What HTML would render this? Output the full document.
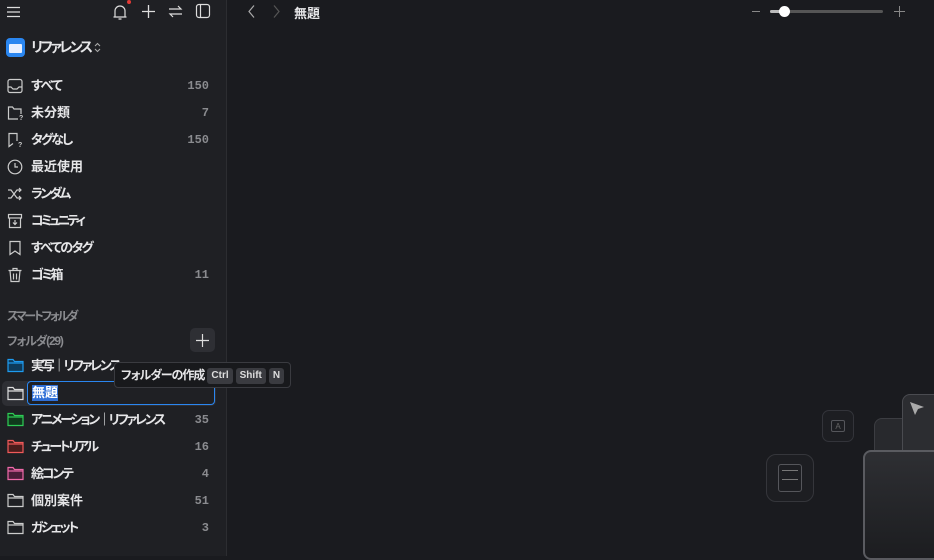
<!DOCTYPE html>
<html><head><meta charset="utf-8"><style>
*{margin:0;padding:0;box-sizing:border-box}
body{width:934px;height:556px;background:#1a1b1f;font-family:"Liberation Sans","Noto Sans CJK JP",sans-serif;color:#e6e6e8;overflow:hidden;position:relative;font-feature-settings:"palt"}
#side{position:absolute;left:0;top:0;width:227px;height:556px;background:#1f2024;border-right:1px solid #2c2d31}
.ic{position:absolute}
.row{position:absolute;left:0;width:226px;height:24px;font-size:13px;font-weight:bold;line-height:24px}
.row .t{position:absolute;left:31px;white-space:nowrap}
.row .n{position:absolute;right:17px;font-family:"Liberation Mono",monospace;color:#8a8b8f;font-size:12px;font-weight:bold;letter-spacing:0}
.row svg{position:absolute;left:7px;top:4px}
.sec{position:absolute;left:7px;font-size:12px;color:#8a8b8f;font-weight:bold}
.kbd{display:inline-block;background:#3a3b40;border-radius:3px;font-size:10px;padding:0 4px;height:16px;line-height:16px;margin-left:3px;font-weight:bold;color:#ddd;vertical-align:middle;letter-spacing:0}
</style></head><body>
<div id="side">
<svg class="ic" style="left:6px;top:4px" width="16" height="16" viewBox="0 0 16 16" stroke="#ddd" stroke-width="1.3" fill="none"><path d="M1 3.5h13M1 8h13M1 12.5h13"/></svg>
<svg class="ic" style="left:111px;top:3px" width="18" height="18" viewBox="0 0 18 18" stroke="#ddd" stroke-width="1.2" fill="none"><path d="M4 14V8a5 5 0 0 1 10 0v6M2.5 14h13M7.5 16h3"/></svg>
<div class="ic" style="left:127px;top:0px;width:4px;height:4px;border-radius:50%;background:#e53935"></div>
<svg class="ic" style="left:141px;top:4px" width="15" height="15" viewBox="0 0 15 15" stroke="#ddd" stroke-width="1.3"><path d="M7.5 1v13M1 7.5h13"/></svg>
<svg class="ic" style="left:168px;top:4px" width="15" height="15" viewBox="0 0 15 15" stroke="#ddd" stroke-width="1.2" fill="none"><path d="M1 5h12l-3-3M14 10H2l3 3"/></svg>
<svg class="ic" style="left:195px;top:3px" width="16" height="16" viewBox="0 0 16 16" stroke="#ddd" stroke-width="1.2" fill="none"><rect x="1.5" y="1.5" width="13" height="13" rx="2.5"/><path d="M5.5 1.5v13"/></svg>
<div class="ic" style="left:6px;top:38px;width:19px;height:19px;border-radius:4px;background:#2a86f0"><div style="position:absolute;left:3px;top:6px;width:13px;height:9px;background:#e8f0ff;border-radius:1px"></div></div>
<div class="ic" style="left:31px;top:38px;font-size:14px;font-weight:bold;line-height:19px;letter-spacing:-2.5px">リファレンス</div>
<svg class="ic" style="left:94px;top:42px" width="7" height="11" viewBox="0 0 7 11" stroke="#aaa" stroke-width="1.1" fill="none"><path d="M1 4l2.5-2.5L6 4M1 7l2.5 2.5L6 7"/></svg>

<div class="row" style="top:74px"><svg width="16" height="16" viewBox="0 0 16 16" stroke="#ccc" stroke-width="1.2" fill="none"><rect x="1" y="1.5" width="14" height="13" rx="2"/><path d="M1 9h3l2 2h4l2-2h3"/></svg><span class="t" style="letter-spacing:-1.3px">すべて</span><span class="n">150</span></div>
<div class="row" style="top:101px"><svg width="18" height="16" viewBox="0 0 18 16" stroke="#ccc" stroke-width="1.2" fill="none"><path d="M11 14H1.5V2h4l1.5 2h7v5"/><text x="12" y="15" font-size="7" fill="#ccc" stroke="none">?</text></svg><span class="t">未分類</span><span class="n">7</span></div>
<div class="row" style="top:128px"><svg width="18" height="16" viewBox="0 0 18 16" stroke="#ccc" stroke-width="1.2" fill="none"><path d="M10 9V1.5H2v13l4-3"/><text x="11" y="15" font-size="7" fill="#ccc" stroke="none">?</text></svg><span class="t" style="letter-spacing:-2px">タグなし</span><span class="n">150</span></div>
<div class="row" style="top:155px"><svg width="16" height="16" viewBox="0 0 16 16" stroke="#ccc" stroke-width="1.2" fill="none"><circle cx="8" cy="8" r="6.8"/><path d="M8 4v4h3"/></svg><span class="t">最近使用</span></div>
<div class="row" style="top:182px"><svg width="16" height="16" viewBox="0 0 16 16" stroke="#ccc" stroke-width="1.2" fill="none"><path d="M1 4h3l6 8h4M1 12h3l6-8h4M12 2l2 2-2 2M12 10l2 2-2 2"/></svg><span class="t" style="letter-spacing:-2.7px">ランダム</span></div>
<div class="row" style="top:209px"><svg width="16" height="16" viewBox="0 0 16 16" stroke="#ccc" stroke-width="1.2" fill="none"><rect x="1.5" y="1.5" width="13" height="3.5"/><path d="M2.5 5v9.5h11V5M8 7v4.5M6 9.5l2 2 2-2"/></svg><span class="t" style="letter-spacing:-3px">コミュニティ</span></div>
<div class="row" style="top:236px"><svg width="16" height="16" viewBox="0 0 16 16" stroke="#ccc" stroke-width="1.2" fill="none"><path d="M3 1.5h10v13l-5-3.5-5 3.5z"/></svg><span class="t" style="letter-spacing:-1.7px">すべてのタグ</span></div>
<div class="row" style="top:263px"><svg width="16" height="16" viewBox="0 0 16 16" stroke="#ccc" stroke-width="1.2" fill="none"><path d="M1.5 3.5h13M6 3.5V1.5h4v2M3 3.5l1 11h8l1-11M6.5 6.5v6M9.5 6.5v6"/></svg><span class="t" style="letter-spacing:-2.5px">ゴミ箱</span><span class="n">11</span></div>

<div class="sec" style="top:307px;letter-spacing:-2.3px">スマートフォルダ</div>
<div class="sec" style="top:332px;letter-spacing:-1.2px">フォルダ(29)</div>
<div class="ic" style="left:190px;top:328px;width:25px;height:24px;background:#2e2f34;border-radius:5px"><svg style="position:absolute;left:6px;top:6px" width="13" height="13" viewBox="0 0 13 13" stroke="#ddd" stroke-width="1.2"><path d="M6.5 0v13M0 6.5h13"/></svg></div>

<div class="row" style="top:354px"><svg width="17" height="15" viewBox="0 0 17 15"><path d="M1 13.5V1.5h5l1.5 2H16v10z" fill="#0e3a5a" stroke="#1e9bf0" stroke-width="1.2"/><path d="M1 5h15" stroke="#1e9bf0" stroke-width="1.2"/></svg><span class="t" style="letter-spacing:-2.2px">実写｜リファレンス</span></div>
<div class="row" style="top:381px;background:#2e2f34;width:214px;left:2px;border-radius:5px;height:25px"></div>
<div class="row" style="top:382px"><svg width="17" height="15" viewBox="0 0 17 15" fill="none" stroke="#ddd" stroke-width="1.2"><path d="M1 13.5V1.5h5l1.5 2H16v10zM1 5h15"/></svg></div>
<div class="ic" style="left:27px;top:381px;width:188px;height:24px;border:1.3px solid #2a86f0;border-radius:4px;background:#1f2024"><span style="position:absolute;left:4px;top:3px;background:#2f6fd6;color:#fff;font-size:13px;font-weight:bold;line-height:16px">無題</span></div>
<div class="row" style="top:408px"><svg width="17" height="15" viewBox="0 0 17 15"><path d="M1 13.5V1.5h5l1.5 2H16v10z" fill="#0f3a1c" stroke="#2ecc55" stroke-width="1.2"/><path d="M1 5h15" stroke="#2ecc55" stroke-width="1.2"/></svg><span class="t" style="letter-spacing:-2.3px">アニメーション｜リファレンス</span><span class="n">35</span></div>
<div class="row" style="top:435px"><svg width="17" height="15" viewBox="0 0 17 15"><path d="M1 13.5V1.5h5l1.5 2H16v10z" fill="#4a1c1c" stroke="#f05a5a" stroke-width="1.2"/><path d="M1 5h15" stroke="#f05a5a" stroke-width="1.2"/></svg><span class="t" style="letter-spacing:-2.4px">チュートリアル</span><span class="n">16</span></div>
<div class="row" style="top:462px"><svg width="17" height="15" viewBox="0 0 17 15"><path d="M1 13.5V1.5h5l1.5 2H16v10z" fill="#4a1c38" stroke="#f06aaa" stroke-width="1.2"/><path d="M1 5h15" stroke="#f06aaa" stroke-width="1.2"/></svg><span class="t" style="letter-spacing:-2.2px">絵コンテ</span><span class="n">4</span></div>
<div class="row" style="top:489px"><svg width="17" height="15" viewBox="0 0 17 15" fill="none" stroke="#ccc" stroke-width="1.2"><path d="M1 13.5V1.5h5l1.5 2H16v10zM1 5h15"/></svg><span class="t">個別案件</span><span class="n">51</span></div>
<div class="row" style="top:516px"><svg width="17" height="15" viewBox="0 0 17 15" fill="none" stroke="#ccc" stroke-width="1.2"><path d="M1 13.5V1.5h5l1.5 2H16v10zM1 5h15"/></svg><span class="t" style="letter-spacing:-2.4px">ガシェット</span><span class="n">3</span></div>
</div>

<div class="ic" style="left:114px;top:362px;width:177px;height:26px;background:#18191c;border:1px solid #3a3b40;border-radius:4px;font-size:12px;font-weight:bold;line-height:24px;padding-left:6px;white-space:nowrap;overflow:hidden"><span style="letter-spacing:-1px">フォルダーの作成</span><span class="kbd">Ctrl</span><span class="kbd">Shift</span><span class="kbd">N</span></div>

<svg class="ic" style="left:244px;top:4px" width="40" height="15" viewBox="0 0 40 15" fill="none" stroke-width="1.2"><path d="M10 1.5l-5 6 5 6" stroke="#aaa"/><path d="M30 1.5l5 6-5 6" stroke="#555"/></svg>
<div class="ic" style="left:294px;top:3px;font-size:13px;font-weight:bold">無題</div>
<div class="ic" style="left:752px;top:11px;width:8px;height:1px;background:#888"></div>
<div class="ic" style="left:770px;top:10px;width:113px;height:3px;background:#555;border-radius:2px"></div>
<div class="ic" style="left:770px;top:10px;width:14px;height:3px;background:#bbb;border-radius:2px"></div>
<div class="ic" style="left:779px;top:6px;width:11px;height:11px;background:#fff;border-radius:50%"></div>
<svg class="ic" style="left:894px;top:6px" width="11" height="11" viewBox="0 0 11 11" stroke="#888" stroke-width="1"><path d="M5.5 0v11M0 5.5h11"/></svg>

<div class="ic" style="left:766px;top:454px;width:48px;height:48px;border:1.5px solid #35363b;border-radius:10px;background:#1d1e22"><div style="position:absolute;left:11px;top:9px;width:24px;height:28px;border:1.3px solid #55565b;border-radius:3px"></div><div style="position:absolute;left:15px;top:15px;width:16px;height:10px;border-top:1px solid #777;border-bottom:1px solid #777"></div></div>
<div class="ic" style="left:822px;top:410px;width:32px;height:32px;border:1.5px solid #33343a;border-radius:7px;background:#1d1e22"><div style="position:absolute;left:8px;top:9px;width:14px;height:12px;border:1px solid #55565b;border-radius:2px;font-size:8px;color:#666;text-align:center;line-height:11px">A</div></div>
<div class="ic" style="left:874px;top:418px;width:40px;height:60px;border:1.5px solid #3c3d42;border-radius:8px;background:#28292d"></div>
<div class="ic" style="left:902px;top:394px;width:40px;height:80px;border:1.5px solid #4a4b50;border-radius:8px;background:#2c2d31"></div>
<svg class="ic" style="left:909px;top:401px" width="16" height="16" viewBox="0 0 16 16"><path d="M1 1l14 5-6 2-3 6z" fill="#aaa"/></svg>
<div class="ic" style="left:863px;top:450px;width:80px;height:110px;border:2px solid #5a5b60;border-radius:8px 0 0 8px;background:linear-gradient(#2e2f33,#1c1d20)"></div>
</body></html>
